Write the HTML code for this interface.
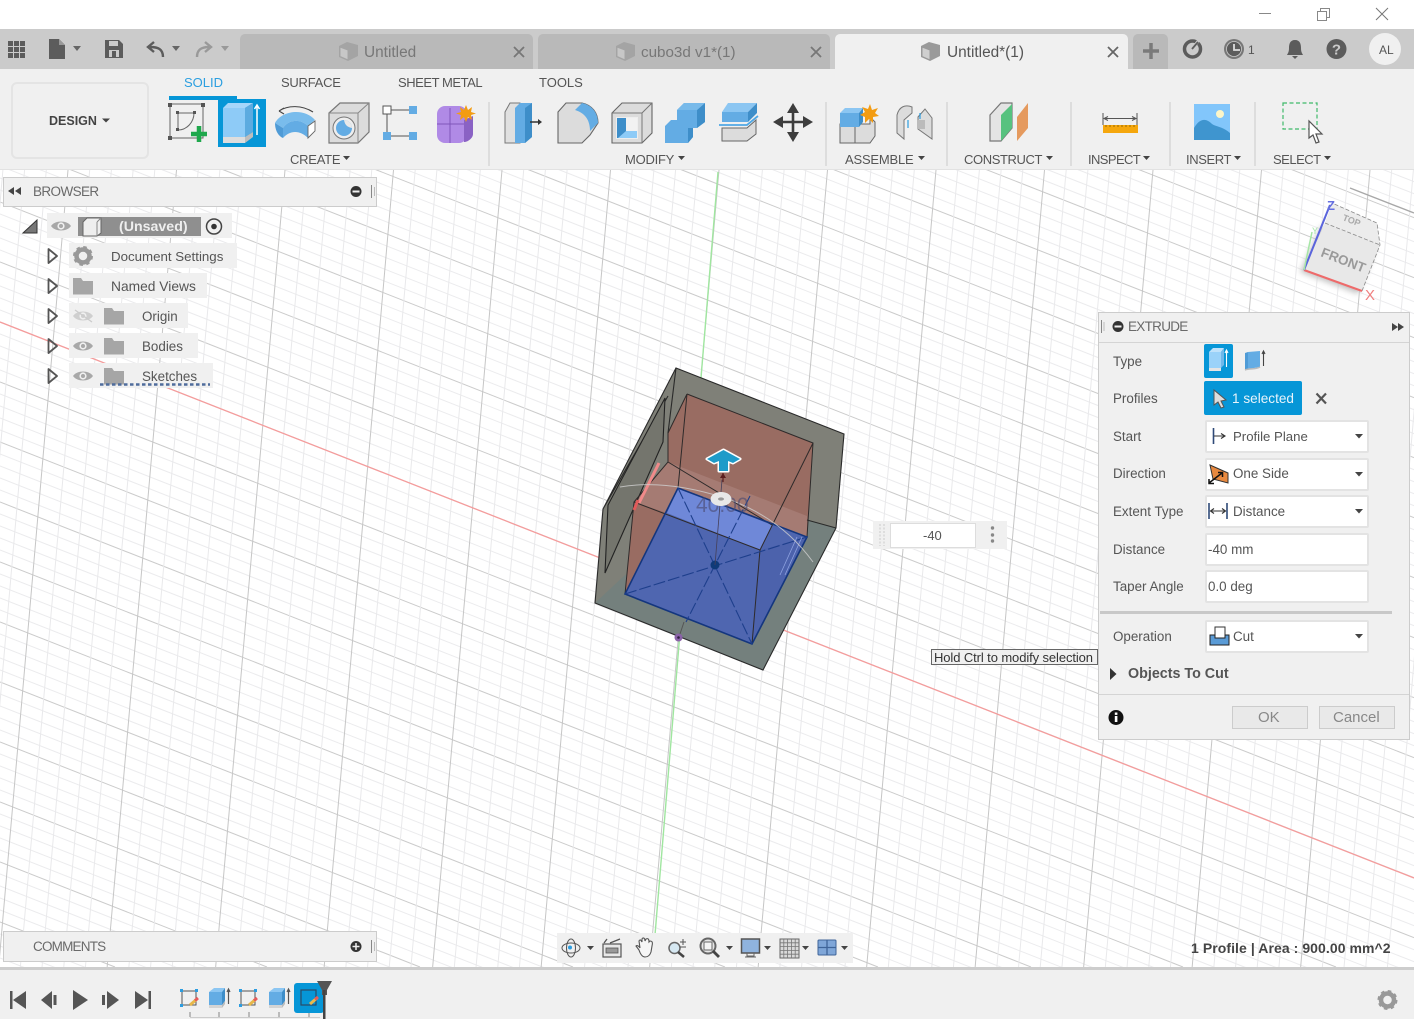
<!DOCTYPE html>
<html><head><meta charset="utf-8"><style>
html,body{margin:0;padding:0;background:#fff;overflow:hidden}
#p{position:relative;width:1414px;height:1019px;overflow:hidden;background:#fff;font-family:"Liberation Sans",sans-serif;color:#555;filter:blur(.35px)}
.b{position:absolute;box-sizing:border-box}
.t{position:absolute;white-space:nowrap;line-height:16px;margin-top:-7px;font-size:13.4px;color:#555}
svg{position:absolute;left:0;top:0}
.f{position:absolute;box-sizing:border-box;left:1205px;width:164px;height:33px;background:#fff;border:2px solid #e3e3e3;border-radius:2px}
.r{position:absolute;background:#f0f0f0;height:25px}
</style></head><body><div id="p">

<svg width="1414" height="1019" viewBox="0 0 1414 1019">
<defs>
<g id="vg"><path d="M41.700 170L-27.900 970M63.400 170L-6.200 970M85.100 170L15.500 970M106.800 170L37.200 970" stroke="#e9e9eb" stroke-width="1" fill="none"/><path d="M20 170L-49.600 970" stroke="#c6c6c6" stroke-width="1" fill="none"/></g>
<g id="dg"><path d="M0 12L1414 567.700M0 24L1414 579.700M0 36L1414 591.700M0 48L1414 603.700" stroke="#ebebed" stroke-width="1" fill="none"/><path d="M0 0L1414 555.700" stroke="#cbcbcb" stroke-width="1" fill="none"/></g>
</defs>
<use href="#dg" y="-398"/><use href="#dg" y="-338"/><use href="#dg" y="-278"/><use href="#dg" y="-218"/><use href="#dg" y="-158"/><use href="#dg" y="-98"/><use href="#dg" y="-38"/><use href="#dg" y="22"/><use href="#dg" y="82"/><use href="#dg" y="142"/><use href="#dg" y="202"/><use href="#dg" y="262"/><use href="#dg" y="322"/><use href="#dg" y="382"/>
<!-- lower diagonals, shortened so they stop behind the timeline -->
<path d="M0 454l1336 525M0 466l1336 525M0 478l1336 525M0 490l1336 525M0 514l1183 465M0 526l1183 465M0 538l1183 465M0 550l1183 465M0 574l1031 405M0 586l1031 405M0 598l1031 405M0 610l1031 405M0 634l878 345M0 646l878 345M0 658l878 345M0 670l878 345M0 694l725 285M0 706l725 285M0 718l725 285M0 730l725 285M0 754l573 225M0 766l573 225M0 778l573 225M0 790l573 225M0 814l420 165M0 826l420 165M0 838l420 165M0 850l420 165M0 874l267 105M0 886l267 105M0 898l267 105M0 910l267 105M0 934l115 45M0 946l115 45M0 958l115 45M0 970l115 45" stroke="#ebebed" stroke-width="1" fill="none"/>
<path d="M0 442l1336 525M0 502l1183 465M0 562l1031 405M0 622l878 345M0 682l725 285M0 742l573 225M0 802l420 165M0 862l267 105M0 922l115 45" stroke="#cbcbcb" stroke-width="1" fill="none"/>
<use href="#vg" x="-60.500"/><use href="#vg" x="48"/><use href="#vg" x="156.500"/><use href="#vg" x="265"/><use href="#vg" x="373.500"/><use href="#vg" x="482"/><use href="#vg" x="590.500"/><use href="#vg" x="699"/><use href="#vg" x="807.500"/><use href="#vg" x="916"/><use href="#vg" x="1024.500"/><use href="#vg" x="1133"/><use href="#vg" x="1241.500"/><use href="#vg" x="1350"/>
<path d="M1350 188L1414 213" stroke="#a8a8a8" stroke-width="1.400"/>
<path d="M0 322L1414 878" stroke="#f59c9c" stroke-width="1.300"/>
<path d="M718 172L655 935" stroke="#a0e6a0" stroke-width="1.400"/>

<!-- cube -->
<polygon points="676,368 844,434 836,528 763,670 595,603 603,509" fill="#7f8078"/>
<polygon points="595,603 763,670 836,528 807,520 690,540 625,575" fill="#74807d"/>
<polygon points="687,394 813,443 807,537 678,488 625,594 634,502 668,462 668,433" fill="#996c62"/>
<polygon points="668,462 807,516 807,537 678,488 667,513 634,502" fill="#a57b73"/>
<polygon points="625,594 678,488 807,537 752,644" fill="#4f66b0"/>
<polygon points="678,488 772,525 760,550 667,513" fill="#6f88d8"/>
<polygon points="760,550 807,537 752,644" fill="#4c62ac"/>
<path d="M676 368L844 434L836 528L763 670L595 603L603 509L676 368ZM676 368L668 433M836 528L807 520M603 509L668 396" stroke="#2a2a2a" stroke-width="1.100" fill="none"/>
<polygon points="665,398 663,442 605,573 608,505" fill="#74756d" stroke="#222" stroke-width="1.100"/>
<path d="M687 394L813 443L807 537M687 394L678 488M687 394L668 433V462L634 502L625 594M668 462L772 525M634 502L760 550M813 443L760 550L752 644" stroke="#2e2a2a" stroke-width="1" fill="none"/>
<path d="M659 463L639 503" stroke="#f08a8a" stroke-width="3"/>
<path d="M634 510L638 500" stroke="#e05a5a" stroke-width="3"/>
<path d="M625 594L678 488L807 537L752 644Z" stroke="#14367e" stroke-width="1.600" fill="none"/>
<path d="M625 594L807 537M678 488L752 644M750 496L686 622" stroke="#1e3f8c" stroke-width="1.100" stroke-dasharray="12 3" fill="none"/>
<path d="M797 537L780 575M802 537L785 575" stroke="#8ea2e0" stroke-width=".8" fill="none"/>
<circle cx="715" cy="565" r="4.500" fill="#0f3a78"/>
<path d="M715 565L722 480" stroke="#45405a" stroke-width=".8"/>
<path d="M620 487C660 480 700 490 725 498C760 510 790 530 813 562" stroke="#cfcfcf" stroke-width="1" fill="none" opacity=".8"/>
<text x="696" y="512" font-family="Liberation Sans" font-size="21" fill="#4a4a70" opacity=".6">40.00</text>
<ellipse cx="721" cy="499" rx="10.500" ry="7" fill="#e8e8e8"/><ellipse cx="721" cy="499" rx="3" ry="1.600" fill="#999"/>
<path d="M723 473L723 482" stroke="#5b1e1e" stroke-width="1.200"/><path d="M720 478L723 473L726 478Z" fill="#5b1e1e"/>
<path d="M723.500 450L740 459L733 463L728 461V471H719V461L714 463L707 459Z" fill="#1f9bc9" stroke="#fff" stroke-width="3" stroke-linejoin="round" paint-order="stroke"/>
<path d="M684 622L679 637" stroke="#555" stroke-width="1"/>
<circle cx="678.500" cy="637.500" r="4" fill="#8a62a8"/><circle cx="678.500" cy="637.500" r="1.300" fill="#2e1e3e"/>

<!-- viewcube -->
<polygon points="1300,272 1358,294 1376,248 1321,226" fill="#c4c4c4" style="filter:blur(3px)"/>
<polygon points="1304,270 1362,291 1380,245 1325,223" fill="#e8e8e8"/>
<polygon points="1325,223 1380,245 1377,223 1332,203" fill="#ececec"/>
<path d="M1362 291L1380 245L1377 223L1332 203M1325 223L1380 245" stroke="#8a8a8a" stroke-width=".8" stroke-dasharray="4 2" fill="none"/>
<path d="M1304 270L1362 291" stroke="#ee6a6a" stroke-width="2"/>
<path d="M1304 270L1330 205" stroke="#5a64dc" stroke-width="2"/>
<path d="M1304 270L1312 232" stroke="#a6e6a6" stroke-width="1.500"/>
<text x="1365" y="300" font-family="Liberation Sans" font-size="15" fill="#f08080">X</text>
<text x="1327" y="210" font-family="Liberation Sans" font-size="13" font-weight="bold" fill="#6670e0">Z</text>
<text x="1312" y="234" font-family="Liberation Sans" font-size="9" fill="#a6e6a6">Y</text>
<text x="1320" y="256" font-family="Liberation Sans" font-size="13.500" font-weight="bold" fill="#9a9a9a" transform="rotate(21 1320 256)">FRONT</text>
<text x="1342" y="220" font-family="Liberation Sans" font-size="9" font-weight="bold" fill="#aaa" transform="rotate(21 1342 220)">TOP</text>
</svg>

<!-- top chrome -->
<div class="b" style="left:0;top:0;width:1414px;height:29px;background:#fff"></div>
<div class="b" style="left:0;top:29px;width:1414px;height:40px;background:#cbcbcb"></div>
<div class="b" style="left:240px;top:34px;width:293px;height:35px;background:#b9b9b9;border-radius:5px 5px 0 0"></div>
<div class="b" style="left:538px;top:34px;width:292px;height:35px;background:#b9b9b9;border-radius:5px 5px 0 0"></div>
<div class="b" style="left:835px;top:34px;width:293px;height:35px;background:#f0f0f0;border-radius:5px 5px 0 0"></div>
<div class="b" style="left:1133px;top:34px;width:35px;height:35px;background:#b9b9b9;border-radius:5px 5px 0 0"></div>
<div class="b" style="left:0;top:69px;width:1414px;height:101px;background:#f0f0f0;border-bottom:1px solid #e2e2e2"></div>
<div class="b" style="left:11px;top:82px;width:138px;height:77px;border:2px solid #e4e4e4;border-radius:6px"></div>
<div class="b" style="left:169px;top:96px;width:68px;height:4px;background:#0696d7"></div>
<div class="b" style="left:218px;top:99px;width:48px;height:48px;background:#0696d7"></div>

<span class="t" style="left:49px;top:120px;font-weight:bold;font-size:12.500px;color:#444">DESIGN</span>
<span class="t" style="left:184px;top:82px;color:#2b9fe0;font-size:13px">SOLID</span>
<span class="t" style="left:281px;top:82px;font-size:13px;letter-spacing:-.25px">SURFACE</span>
<span class="t" style="left:398px;top:82px;font-size:13px;letter-spacing:-.45px">SHEET METAL</span>
<span class="t" style="left:539px;top:82px;font-size:13px">TOOLS</span>
<span class="t" style="left:290px;top:159px;font-size:13px;letter-spacing:-.25px">CREATE</span>
<span class="t" style="left:625px;top:159px;font-size:13px;letter-spacing:-.25px">MODIFY</span>
<span class="t" style="left:845px;top:159px;font-size:13px;letter-spacing:-.2px">ASSEMBLE</span>
<span class="t" style="left:964px;top:159px;font-size:13px;letter-spacing:-.4px">CONSTRUCT</span>
<span class="t" style="left:1088px;top:159px;font-size:13px;letter-spacing:-.6px">INSPECT</span>
<span class="t" style="left:1186px;top:159px;font-size:13px;letter-spacing:-.4px">INSERT</span>
<span class="t" style="left:1273px;top:159px;font-size:13px;letter-spacing:-.5px">SELECT</span>

<span class="t" style="left:364px;top:52px;font-size:15.400px;color:#777">Untitled</span>
<span class="t" style="left:641px;top:52px;font-size:15.200px;color:#777">cubo3d v1*(1)</span>
<span class="t" style="left:947px;top:52px;font-size:15.400px;color:#555">Untitled*(1)</span>
<span class="t" style="left:1248px;top:49px;font-size:12px;color:#555">1</span>
<div class="b" style="left:1369px;top:33px;width:32px;height:32px;border-radius:50%;background:#f0f0f0"></div>
<span class="t" style="left:1379px;top:49px;font-size:12px;color:#555">AL</span>

<!-- browser panel -->
<div class="b" style="left:3px;top:177px;width:374px;height:30px;background:#f0f0f0;border:1px solid #ccc"></div>
<span class="t" style="left:33px;top:191px;font-size:13.500px;color:#6a6a6a;letter-spacing:-.6px">BROWSER</span>
<div class="r" style="left:47px;top:213px;width:185px"></div>
<div class="b" style="left:78px;top:217px;width:123px;height:19px;background:#8f8f8f"></div>
<span class="t" style="left:119px;top:226px;font-weight:bold;font-size:14.200px;color:#eee">(Unsaved)</span>
<div class="r" style="left:69px;top:243px;width:168px"></div>
<div class="r" style="left:69px;top:273px;width:138px"></div>
<div class="r" style="left:69px;top:303px;width:119px"></div>
<div class="r" style="left:69px;top:333px;width:129px"></div>
<div class="r" style="left:69px;top:363px;width:144px"></div>
<span class="t" style="left:111px;top:256px;font-size:13.300px">Document Settings</span>
<span class="t" style="left:111px;top:286px;font-size:13.800px">Named Views</span>
<span class="t" style="left:142px;top:316px">Origin</span>
<span class="t" style="left:142px;top:346px">Bodies</span>
<span class="t" style="left:142px;top:376px">Sketches</span>

<!-- comments -->
<div class="b" style="left:3px;top:931px;width:374px;height:31px;background:#f0f0f0;border:1px solid #ccc"></div>
<span class="t" style="left:33px;top:946px;font-size:13.500px;color:#6a6a6a;letter-spacing:-.8px">COMMENTS</span>

<!-- nav bar -->
<div class="b" style="left:557px;top:933px;width:296px;height:30px;background:#f0f0f0"></div>
<span class="t" style="left:1191px;top:947px;font-weight:bold;font-size:14px;color:#444;letter-spacing:.07px">1 Profile | Area : 900.00 mm^2</span>

<!-- timeline -->
<div class="b" style="left:0;top:967px;width:1414px;height:52px;background:#f0f0f0;border-top:3px solid #cdcdcd"></div>
<div class="b" style="left:294px;top:983px;width:30px;height:30px;background:#0696d7;border-radius:3px"></div>

<!-- float input -->
<div class="b" style="left:873px;top:521px;width:134px;height:28px;background:#f0f0f0"></div>
<div class="b" style="left:890px;top:523px;width:86px;height:25px;background:#fff;border:1px solid #ddd"></div>
<span class="t" style="left:923px;top:535px;font-size:13px;color:#555">-40</span>

<!-- tooltip -->
<div class="b" style="left:931px;top:649px;width:167px;height:16px;background:#f0f0f0;border:1px solid #666"></div>
<span class="t" style="left:934px;top:657px;font-size:13px;color:#333;letter-spacing:-.1px">Hold Ctrl to modify selection</span>

<!-- extrude panel -->
<div class="b" style="left:1098px;top:312px;width:312px;height:428px;background:#f0f0f0;border:1px solid #ccc"></div>
<div class="b" style="left:1099px;top:342px;width:310px;height:1px;background:#d4d4d4"></div>
<span class="t" style="left:1128px;top:326px;font-size:13.500px;color:#6a6a6a;letter-spacing:-.7px">EXTRUDE</span>
<span class="t" style="left:1113px;top:361px">Type</span>
<span class="t" style="left:1113px;top:398px">Profiles</span>
<span class="t" style="left:1113px;top:436px">Start</span>
<span class="t" style="left:1113px;top:473px">Direction</span>
<span class="t" style="left:1113px;top:511px">Extent Type</span>
<span class="t" style="left:1113px;top:549px">Distance</span>
<span class="t" style="left:1113px;top:586px">Taper Angle</span>
<span class="t" style="left:1113px;top:636px">Operation</span>
<div class="b" style="left:1204px;top:344px;width:29px;height:34px;background:#0696d7;border-radius:2px"></div>
<div class="b" style="left:1204px;top:381px;width:98px;height:34px;background:#0696d7;border-radius:2px"></div>
<span class="t" style="left:1232px;top:398px;color:#e8f4fb;font-size:13.600px">1 selected</span>
<div class="f" style="top:420px"></div>
<div class="f" style="top:458px"></div>
<div class="f" style="top:495px"></div>
<div class="f" style="top:533px"></div>
<div class="f" style="top:570px"></div>
<div class="f" style="top:620px"></div>
<span class="t" style="left:1233px;top:436px;font-size:13.200px">Profile Plane</span>
<span class="t" style="left:1233px;top:473px">One Side</span>
<span class="t" style="left:1233px;top:511px">Distance</span>
<span class="t" style="left:1208px;top:549px">-40 mm</span>
<span class="t" style="left:1208px;top:586px">0.0 deg</span>
<span class="t" style="left:1233px;top:636px">Cut</span>
<div class="b" style="left:1100px;top:611px;width:292px;height:3px;background:#c8c8c8"></div>
<span class="t" style="left:1128px;top:673px;font-weight:bold;font-size:14.300px">Objects To Cut</span>
<div class="b" style="left:1099px;top:694px;width:310px;height:1px;background:#d4d4d4"></div>
<div class="b" style="left:1232px;top:706px;width:76px;height:23px;background:#e9e9e9;border:1px solid #ccc"></div>
<div class="b" style="left:1319px;top:706px;width:76px;height:23px;background:#e9e9e9;border:1px solid #ccc"></div>
<span class="t" style="left:1258px;top:717px;font-size:15px;color:#888">OK</span>
<span class="t" style="left:1333px;top:717px;font-size:15px;color:#888">Cancel</span>

<!-- icon layer -->
<svg width="1414" height="1019" viewBox="0 0 1414 1019">
<defs>
<g id="eye"><path d="M-10 0C-6-6 6-6 10 0C6 6-6 6-10 0Z" fill="#a8a8a8"/><circle r="3.600" fill="#f0f0f0"/><circle r="2" fill="#a8a8a8"/></g>
<path id="fold" d="M0 0H8L10 3H20V16.500H0Z" fill="#a6a6a6"/>
<path id="tri" d="M1.500 1L10 8L1.500 15Z" fill="none" stroke="#555" stroke-width="1.800" stroke-linejoin="round"/>
<g id="tcube"><path d="M0 4L8 0L19 3V14L9 19L0 15Z" fill="#9a9a9a"/><path d="M1 5L9 8V18L1 14.500Z" fill="#cfcfcf" stroke="#999" stroke-width="1"/></g>
<g id="ts"><rect x="2" y="2" width="14" height="14" fill="none" stroke="#555" stroke-width="1"/><rect x="0" y="0" width="3" height="3" fill="#2c9de0"/><rect x="15" y="0" width="3" height="3" fill="#2c9de0"/><rect x="0" y="15" width="3" height="3" fill="#2c9de0"/><path d="M10 16L17 10" stroke="#e8b84a" stroke-width="3"/><path d="M15 11.500L18 9" stroke="#e85a5a" stroke-width="3"/></g>
<g id="te"><path d="M0 5L5 1H16L13 5Z" fill="#8cc6f2"/><path d="M0 5H13V18H0Z" fill="#63ace4"/><path d="M13 5L16 1V14L13 18Z" fill="#3e8ec9"/><path d="M0 18H13V21H0Z" fill="#d4d4d4"/><path d="M13 18L16 14V17L13 21Z" fill="#bbb"/><path d="M19.500 17V3M18 5L19.500 2L21 5" stroke="#555" stroke-width="1.200" fill="none"/></g>
</defs>

<!-- window controls -->
<path d="M1259 13.500H1271" stroke="#888"/>
<path d="M1317.500 11.500H1326.500V20.500H1317.500ZM1320.500 11V8.500H1329.500V17.500H1327" stroke="#888" fill="none"/>
<path d="M1376 8L1388 20M1388 8L1376 20" stroke="#777"/>

<!-- quick bar -->
<g fill="#5c5c5c"><rect x="8" y="41" width="5" height="5"/><rect x="14" y="41" width="5" height="5"/><rect x="20" y="41" width="5" height="5"/><rect x="8" y="47" width="5" height="5"/><rect x="14" y="47" width="5" height="5"/><rect x="20" y="47" width="5" height="5"/><rect x="8" y="53" width="5" height="5"/><rect x="14" y="53" width="5" height="5"/><rect x="20" y="53" width="5" height="5"/></g>
<path d="M49 39H59L65 45V59H49Z" fill="#5c5c5c"/><path d="M59 39L65 45H59Z" fill="#999"/>
<path d="M73 46H81L77 51Z" fill="#666"/>
<path d="M105 40H119L123 44V58H105Z" fill="#5c5c5c"/><rect x="109" y="41" width="9" height="5" fill="#cbcbcb"/><rect x="109" y="50" width="10" height="7" fill="#cbcbcb"/><rect x="112" y="51" width="4" height="6" fill="#5c5c5c"/>
<path d="M163 57C163 49 158 47 150 47M154 42L148 47L154 52" stroke="#5c5c5c" stroke-width="2.400" fill="none"/>
<path d="M172 46H180L176 51Z" fill="#666"/>
<path d="M197 57C197 49 202 47 209 47M205 42L211 47L205 52" stroke="#999" stroke-width="2.400" fill="none"/>
<path d="M221 46H229L225 51Z" fill="#999"/>
<use href="#tcube" x="339" y="42" opacity=".65"/><use href="#tcube" x="616" y="42" opacity=".65"/><use href="#tcube" x="921" y="42"/>
<g stroke="#777" stroke-width="1.800"><path d="M514 47L524 57M524 47L514 57M811 47L821 57M821 47L811 57"/></g>
<path d="M1108 47L1118 57M1118 47L1108 57" stroke="#666" stroke-width="1.800"/>
<path d="M1143 51H1159M1151 43V59" stroke="#7a7a7a" stroke-width="3.500"/>
<circle cx="1192.500" cy="49" r="8" fill="none" stroke="#5c5c5c" stroke-width="3.500"/><path d="M1192 49L1199 40" stroke="#cbcbcb" stroke-width="3"/><path d="M1192 49L1198 42" stroke="#5c5c5c" stroke-width="1.800"/>
<circle cx="1234" cy="49" r="10" fill="#777"/><circle cx="1234" cy="49" r="7.500" fill="#5c5c5c" stroke="#cbcbcb" stroke-width=".8"/><path d="M1234 44V50H1240" stroke="#ddd" stroke-width="1.800" fill="none"/>
<path d="M1295 40C1290 40 1289 44 1289 48C1289 52 1288 53 1287 55H1303C1302 53 1301 52 1301 48C1301 44 1300 40 1295 40Z" fill="#5c5c5c"/><path d="M1292 56H1298L1295 59Z" fill="#5c5c5c"/>
<circle cx="1336.500" cy="49" r="10" fill="#5c5c5c"/>
<text x="1336.500" y="54.500" text-anchor="middle" font-family="Liberation Sans" font-weight="bold" font-size="15" fill="#cbcbcb">?</text>

<!-- design caret -->
<path d="M102 118.500H110L106 122.500Z" fill="#444"/>
<!-- label carets -->
<g fill="#444"><path d="M343 156H350L346.500 160Z"/><path d="M678 156H685L681.500 160Z"/><path d="M918 156H925L921.500 160Z"/><path d="M1046 156H1053L1049.500 160Z"/><path d="M1143 156H1150L1146.500 160Z"/><path d="M1234 156H1241L1237.500 160Z"/><path d="M1324 156H1331L1327.500 160Z"/></g>
<!-- separators -->
<g fill="#ddd"><rect x="488" y="102" width="2" height="64"/><rect x="825" y="102" width="2" height="64"/><rect x="946" y="102" width="2" height="64"/><rect x="1070" y="102" width="2" height="64"/><rect x="1169" y="102" width="2" height="64"/><rect x="1254" y="102" width="2" height="64"/></g>

<!-- sketch -->
<rect x="170" y="104" width="33" height="34" fill="none" stroke="#666" stroke-width="1"/>
<g fill="#555"><rect x="168" y="103" width="4" height="4"/><rect x="201" y="103" width="4" height="4"/><rect x="168" y="136" width="4" height="4"/></g>
<path d="M178 113V130M178 113H194C194 122 187 130 178 130" stroke="#666" fill="none"/>
<g fill="#555"><rect x="176" y="111" width="3" height="3"/><rect x="193" y="111" width="3" height="3"/><rect x="176" y="128" width="3" height="3"/></g>
<path d="M199 126V142M191 134H207" stroke="#1fa84d" stroke-width="4.500"/>
<!-- extrude active -->
<path d="M223 108L228 103H253L245 108Z" fill="#a6d6fa"/><rect x="223" y="108" width="22" height="29" fill="#8ecbf7"/><path d="M245 108L253 103V132L245 137Z" fill="#5cabe0"/><rect x="223" y="137" width="22" height="6" fill="#ddd"/><path d="M245 137L253 132V137L245 143Z" fill="#bdbdbd"/>
<path d="M257 135V106M254.500 109L257 105L259.500 109" stroke="#fff" stroke-width="1.500" fill="none"/>
<!-- revolve -->
<path d="M275 123C282 110 305 108 315 120L308 126C300 118 288 120 283 128Z" fill="#79bcec"/>
<path d="M275 123L283 128V138C278 136 275 130 275 123Z" fill="#4f9bd6"/><path d="M283 128C288 120 300 118 308 126V138C300 130 290 130 283 138Z" fill="#63ace4"/>
<path d="M308 126L315 121V131L308 138Z" fill="#fff" stroke="#666" stroke-width=".9"/>
<path d="M279 111C288 105 302 105 313 112M279 111L284 108M279 111L284 114" stroke="#444" stroke-width="1.100" fill="none"/>
<!-- hole -->
<path d="M329 113L340 103H369V132L358 143H329Z" fill="#dcdcdc" stroke="#777" stroke-width="1.200"/><path d="M329 113H358V143M358 113L369 103" stroke="#888" fill="none"/>
<circle cx="344" cy="128" r="11" fill="#eee" stroke="#777"/><circle cx="344" cy="128" r="8" fill="#63ace4"/><path d="M344 120A8 8 0 0 1 352 128C347 127 345 125 344 120Z" fill="#e8e8e8"/>
<!-- pattern -->
<path d="M391 110H409M387 114V132M391 136H409" stroke="#555" stroke-width="1"/>
<rect x="383" y="106" width="8" height="8" fill="#fff" stroke="#555"/><rect x="409" y="106" width="8" height="8" fill="#63ace4"/><rect x="383" y="132" width="8" height="8" fill="#63ace4"/><rect x="409" y="132" width="8" height="8" fill="#63ace4"/>
<!-- form -->
<rect x="437" y="106" width="30" height="37" rx="8" fill="#b08ae6"/><path d="M464 120L473 116V134C473 138 468 142 464 142Z" fill="#8a62c4"/><path d="M437 124H464M450 108V143" stroke="#7f55ba" stroke-width="1"/>
<path d="M466 105L468 110L472 107L471 112L476 113.500L471 115L472 120L468 117L466 122L464 117L460 120L461 115L456 113.500L461 112L460 107L464 110Z" fill="#f39c12"/>
<!-- press pull -->
<path d="M505 112L510 103H520V143H505Z" fill="#e0e0e0" stroke="#777"/><path d="M515 143V108L520 103H532V137L525 143Z" fill="#63ace4"/><path d="M525 108L532 103V137L525 143Z" fill="#3e8ec9"/>
<path d="M530 122H540" stroke="#333" stroke-width="1.500"/><path d="M538 119L542 122L538 125Z" fill="#333"/>
<!-- fillet -->
<path d="M558 112L566 103H582C592 105 598 113 598 123L590 135L582 143H558Z" fill="#dcdcdc" stroke="#666" stroke-width="1.100"/><path d="M575 110L582 103C592 105 598 113 598 123L590 131C590 120 585 113 575 110Z" fill="#63ace4"/>
<!-- shell -->
<path d="M612 113L622 103H652V133L642 143H612Z" fill="#dcdcdc" stroke="#666" stroke-width="1.100"/><path d="M612 113H642V143M642 113L652 103" stroke="#777" fill="none"/>
<rect x="616" y="117" width="22" height="22" fill="#eee"/><path d="M617 118H626V132H636V138H617Z" fill="#3e8ec9"/><path d="M626 118H637V132H626Z" fill="#f2f2f2"/><path d="M618 138L626 131H637V138Z" fill="#8ecbf7"/>
<!-- combine -->
<path d="M665 126L671 120H677V110L684 103H705V122L697 128H693V137L688 143H665Z" fill="#63ace4"/><path d="M697 110L705 103V122L697 128Z" fill="#3e8ec9"/><path d="M688 128H693V137L688 143Z" fill="#3e8ec9"/><path d="M677 110L684 103H705L697 110Z" fill="#78baea"/>
<!-- split -->
<path d="M722 112L728 103H757L748 112Z" fill="#8cc6f2"/><rect x="722" y="112" width="26" height="10" fill="#63ace4"/><path d="M748 112L757 103V113L748 122Z" fill="#3e8ec9"/>
<path d="M719 125H747L758 116" stroke="#4fa7e4" stroke-width="1.800" fill="none"/>
<path d="M722 128H747L756 120V134L747 141H722Z" fill="#dcdcdc" stroke="#666"/>
<!-- move -->
<path d="M793 112V132M783 122H803" stroke="#3d3d3d" stroke-width="2.600"/>
<path d="M793 103L799 113H787ZM793 142L787 132H799ZM773 122L783 116V128ZM813 122L803 116V128Z" fill="#3d3d3d"/>
<!-- assemble -->
<path d="M840 143V124H870V117L875 122V136L870 143Z" fill="#dcdcdc" stroke="#666"/><path d="M855 124V143" stroke="#666"/>
<rect x="840" y="113" width="19" height="14" fill="#63ace4"/><path d="M840 113L845 108H863L859 113Z" fill="#8cc6f2"/><path d="M859 113L863 108V122L859 127Z" fill="#3e8ec9"/>
<path d="M870 104L872 110L878 108L875 113L879 116L873 117L873 123L869 119L865 123L865 117L860 115L865 112L862 107L868 109Z" fill="#f39c12"/>
<!-- joint -->
<path d="M897 133V115C899 107 905 104 912 107V113L904 120V139Z" fill="#dcdcdc" stroke="#777"/>
<path d="M925 109L932 118V139L918 129V117Z" fill="#dcdcdc" stroke="#777"/><rect x="917" y="120" width="8" height="9" fill="#bbb"/>
<path d="M908 120V128M920 113V119" stroke="#2c9de0" stroke-width="1.200"/>
<!-- construct -->
<path d="M990 115L1001 103H1012V128L1001 141H990Z" fill="#e4e4e4" stroke="#777" stroke-width="1.200"/>
<path d="M1001 115L1012 104V128L1001 141Z" fill="#57c27f"/><path d="M1017 117L1028 103V128L1017 141Z" fill="#e59a5e"/>
<!-- inspect -->
<path d="M1103 113V125M1137 113V125M1105 118.500H1135M1108 116.500L1104 118.500L1108 120.500M1132 116.500L1136 118.500L1132 120.500" stroke="#555" stroke-width="1" fill="none"/>
<rect x="1103" y="125" width="35" height="8" fill="#f5a70d"/><path d="M1106 125v2M1110 125v2M1114 125v2M1118 125v2M1122 125v2M1126 125v2M1130 125v2M1134 125v2" stroke="#9a6a00"/>
<!-- insert -->
<rect x="1194" y="104" width="36" height="36" fill="#82c6fb"/><circle cx="1220" cy="114" r="4" fill="#fdf6c8"/><path d="M1194 128C1200 118 1206 118 1212 124C1216 127 1222 126 1230 133V140H1194Z" fill="#3f95cf"/>
<!-- select -->
<rect x="1283" y="103" width="34" height="26" fill="none" stroke="#3fb96a" stroke-width="1.200" stroke-dasharray="4 2.500"/>
<path d="M1309 121V138L1313 135L1316 143L1319 142L1316 134L1322 134Z" fill="#fff" stroke="#555" stroke-width="1.200"/>

<!-- browser icons -->
<path d="M8 191L14 187V195ZM15 191L21 187V195Z" fill="#444"/>
<circle cx="356" cy="191.500" r="5.500" fill="#333"/><rect x="352.500" y="190.500" width="7" height="2" fill="#f0f0f0"/>
<path d="M371.500 185V198" stroke="#888"/><path d="M374.500 187V196" stroke="#bbb"/>
<path d="M23 233L37 220V233Z" fill="#777" stroke="#333"/>
<use href="#eye" x="61" y="226"/>
<path d="M83 222L87 218H101V233L97 236H83Z" fill="#eee" stroke="#666"/><path d="M97 222V236M97 222L101 218" stroke="#888"/>
<circle cx="214" cy="226.500" r="7.500" fill="none" stroke="#444" stroke-width="1.500"/><circle cx="214" cy="226.500" r="2.800" fill="#333"/>
<use href="#tri" x="47" y="248"/><use href="#tri" x="47" y="278"/><use href="#tri" x="47" y="308"/><use href="#tri" x="47" y="338"/><use href="#tri" x="47" y="368"/>
<g transform="translate(83 256)"><circle r="6.500" fill="none" stroke="#999" stroke-width="4.500"/><circle r="8.500" fill="none" stroke="#999" stroke-width="3" stroke-dasharray="3.400 3.270"/></g>
<use href="#fold" x="73" y="278"/>
<g opacity=".45"><use href="#eye" x="83" y="316"/></g><path d="M75 310L92 322" stroke="#ccc" stroke-width="1.300"/>
<use href="#fold" x="104" y="308"/>
<use href="#eye" x="83" y="346"/><use href="#fold" x="104" y="338"/>
<use href="#eye" x="83" y="376"/><use href="#fold" x="104" y="368"/>
<path d="M100 384.500L210 384.500" stroke="#4f6c9c" stroke-width="2.500" stroke-dasharray="3.500 2.500"/>

<!-- comments icons -->
<circle cx="356" cy="946.500" r="5.500" fill="#333"/><path d="M352.500 946.500H359.500M356 943V950" stroke="#f0f0f0" stroke-width="1.500"/>
<path d="M371.500 940V953" stroke="#888"/><path d="M374.500 942V951" stroke="#bbb"/>

<!-- float input extras -->
<path d="M880 524V546M884 524V546" stroke="#ddd" stroke-dasharray="2 1.500" stroke-width="2"/>
<g fill="#888"><circle cx="992.500" cy="528" r="1.700"/><circle cx="992.500" cy="535" r="1.700"/><circle cx="992.500" cy="541" r="1.700"/></g>

<!-- extrude panel icons -->
<path d="M1101.500 320V333" stroke="#888"/><path d="M1104 322V331" stroke="#bbb"/>
<circle cx="1118" cy="326.500" r="5.500" fill="#333"/><rect x="1114.500" y="325.500" width="7" height="2" fill="#f0f0f0"/>
<path d="M1392 323L1398 327L1392 331ZM1398 323L1404 327L1398 331Z" fill="#444"/>
<path d="M1209 352L1213 348H1224L1221 352Z" fill="#bfe2fb"/><rect x="1209" y="352" width="12" height="16" fill="#9ad2f9"/><path d="M1221 352L1224 348V365L1221 368Z" fill="#6fb8ea"/><rect x="1209" y="368" width="12" height="3" fill="#e4e4e4"/><path d="M1226.500 367V351M1225 353L1226.500 350L1228 353" stroke="#fff" stroke-width="1.100" fill="none"/>
<path d="M1245 353L1248 352V369L1245 370Z" fill="#4f9bd6"/><path d="M1248 352L1260 351V367L1248 369Z" fill="#63ace4"/><path d="M1245 370C1250 368 1255 370 1260 367" stroke="#bbb" fill="none" stroke-width="1.500"/><path d="M1263.500 366V352M1262 354L1263.500 351L1265 354" stroke="#444" stroke-width="1.100" fill="none"/>
<path d="M1214 390V405L1218 402L1221 408L1224 407L1221 401L1226 400Z" fill="#ddd" stroke="#555"/>
<path d="M1316.500 393.500L1326 403.500M1326 393.500L1316.500 403.500" stroke="#555" stroke-width="2.200"/>
<path d="M1213.500 428V444" stroke="#2f4a78" stroke-width="1.600"/><path d="M1214 436H1224M1221 433.500L1225 436L1221 438.500" stroke="#333" stroke-width="1.100" fill="none"/>
<path d="M1210 465L1228 473V483L1213 479Z" fill="#e8893f" stroke="#333"/><path d="M1209 483L1222 473M1209 479V483.500H1214M1218 472.500H1222.500V477" stroke="#111" stroke-width="1.500" fill="none"/>
<path d="M1209 503V519M1227 503V519" stroke="#2f4a78" stroke-width="1.600"/><path d="M1211 511H1225M1214 508.500L1210.500 511L1214 513.500M1222 508.500L1225.500 511L1222 513.500" stroke="#333" stroke-width="1.100" fill="none"/>
<rect x="1215" y="627" width="10" height="11" fill="#fff" stroke="#333"/><path d="M1210 635H1215V638H1225V635H1229V645H1210Z" fill="#5a9bd6" stroke="#222"/>
<g fill="#444"><path d="M1355 434H1363L1359 438.500Z"/><path d="M1355 472H1363L1359 476.500Z"/><path d="M1355 509H1363L1359 513.500Z"/><path d="M1355 634H1363L1359 638.500Z"/></g>
<path d="M1110 668L1116.500 674L1110 680Z" fill="#333"/>
<circle cx="1116" cy="717.500" r="7.500" fill="#111"/><rect x="1114.800" y="716" width="2.600" height="6" fill="#fff"/><rect x="1114.800" y="712.500" width="2.600" height="2.400" fill="#fff"/>

<!-- navbar icons -->
<ellipse cx="571" cy="948" rx="9" ry="5" fill="none" stroke="#555"/><ellipse cx="571" cy="948" rx="4.500" ry="9" fill="none" stroke="#555"/><circle cx="570" cy="947.500" r="2" fill="#2c9de0"/>
<path d="M587 946H594L590.500 950Z" fill="#444"/>
<rect x="603" y="944" width="18" height="13" fill="#e8e8e8" stroke="#555" stroke-width="1.200"/><rect x="606" y="948" width="12" height="5" fill="#999" stroke="#555" stroke-width=".8"/><path d="M604 943L607 939M610 943L620 939" stroke="#555" stroke-width="1.300"/>
<path d="M639 950L636 946C637 945 639 946 640 948L639 941C640 939 641 940 642 942L642 939C643 937 645 938 645 941L646 939C648 938 649 939 649 942L650 941C652 941 653 942 652 946L651 952C650 955 648 957 645 957C642 957 640 953 639 950Z" fill="#f6f6f6" stroke="#555" stroke-width="1.100"/>
<circle cx="674.500" cy="948" r="5.500" fill="#d6e8f2" stroke="#666" stroke-width="1.500"/><path d="M678 952L684 957" stroke="#444" stroke-width="2.500"/><path d="M683 939V945M680 942H686M680 947H686" stroke="#555"/>
<circle cx="708" cy="946" r="7.500" fill="#e6e6e6" stroke="#666" stroke-width="2"/><rect x="704" y="942" width="8" height="8" fill="#f4f4f4" stroke="#666"/><path d="M713 951L719 957" stroke="#444" stroke-width="2.800"/>
<path d="M726 946H733L729.500 950Z" fill="#444"/>
<rect x="741.500" y="939" width="18" height="14" fill="#8fb3de" stroke="#555" stroke-width="1.500"/><path d="M747 953V956H754V953M745 957H756" stroke="#666" fill="none"/>
<path d="M764 946H771L767.500 950Z" fill="#444"/>
<rect x="780" y="939" width="19" height="19" fill="#d9d9d9" stroke="#666"/><path d="M783.800 939V958M787.600 939V958M791.400 939V958M795.200 939V958M780 942.800H799M780 946.600H799M780 950.400H799M780 954.200H799" stroke="#777" stroke-width=".8"/>
<path d="M802 946H809L805.500 950Z" fill="#444"/>
<rect x="818" y="940" width="18" height="15" rx="1" fill="#7fa6d8" stroke="#3f6499"/><path d="M827 940V955M818 947.500H836" stroke="#3f6499" stroke-width="1.300"/>
<path d="M841 946H848L844.500 950Z" fill="#444"/>

<!-- timeline -->
<g fill="#555">
<rect x="10" y="991" width="2.500" height="18"/><path d="M13 1000L26 991V1009Z"/>
<path d="M41 1000L52 991V1009Z"/><rect x="53.500" y="995" width="3" height="10"/>
<path d="M73 990L88 1000L73 1010Z"/>
<rect x="102" y="995" width="3" height="10"/><path d="M107 991L119 1000L107 1009Z"/>
<path d="M135 991L148 1000L135 1009Z"/><rect x="148.500" y="991" width="2.500" height="18"/>
</g>
<use href="#ts" x="180" y="989"/><use href="#te" x="209" y="987"/><use href="#ts" x="239" y="989"/><use href="#te" x="269" y="987"/>
<g transform="translate(300 989)"><rect x="1" y="1" width="15" height="15" fill="none" stroke="#2b4a66" stroke-width="1.200"/><path d="M10 15L17 9" stroke="#e8b84a" stroke-width="3"/><path d="M15 10.500L18 8" stroke="#e85a5a" stroke-width="3"/></g>
<path d="M190 1012V1017M219 1012V1017M249 1012V1017M279 1012V1017M309 1013V1017" stroke="#bbb" stroke-width="2"/>
<path d="M190 1017.500H320" stroke="#ccc"/>
<path d="M317 981H332L327 990V995H322V990Z" fill="#555"/><rect x="323" y="990" width="2.500" height="29" fill="#444"/>
<g transform="translate(1387.500 1000)"><circle r="6.500" fill="none" stroke="#999" stroke-width="4.500"/><circle r="8.500" fill="none" stroke="#999" stroke-width="3" stroke-dasharray="3.400 3.270"/></g>
</svg>
</div></body></html>
